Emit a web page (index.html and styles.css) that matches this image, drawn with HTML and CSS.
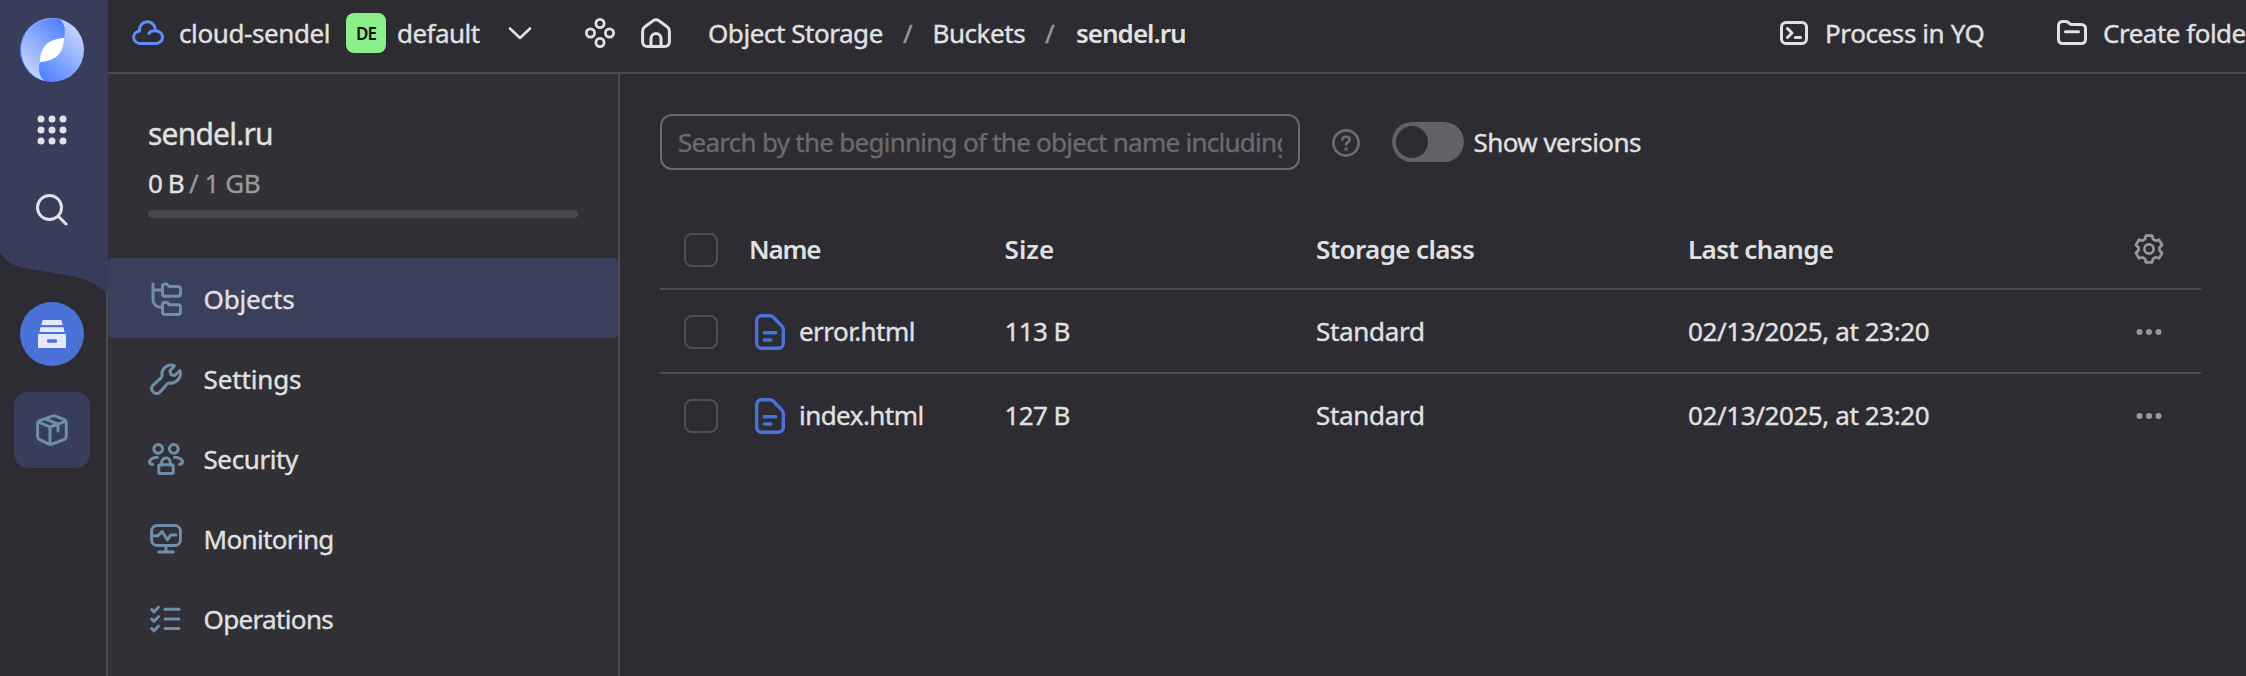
FILE: index.html
```html
<!DOCTYPE html>
<html lang="en">
<head>
<meta charset="utf-8">
<title>sendel.ru</title>
<link rel="stylesheet" href="styles.css">
</head>
<body>
<div class="app">
  <aside class="rail">
    <svg class="rail-wave" width="108" height="300" viewBox="0 0 108 300"><path d="M0 0H108V293.500C98 285.500 88 280 74 276.500L22 267.500C12 265.500 5 260 0 252Z"/></svg>
    <a class="logo">
      <svg width="64" height="64" viewBox="0 0 64 64">
        <defs>
          <linearGradient id="lobe-a" x1="0" y1="50" x2="42" y2="6" gradientUnits="userSpaceOnUse"><stop offset=".1" stop-color="#bccfff"/><stop offset="1" stop-color="#5282ff"/></linearGradient>
          <linearGradient id="lobe-b" x1="64" y1="14" x2="22" y2="58" gradientUnits="userSpaceOnUse"><stop offset=".1" stop-color="#bccfff"/><stop offset="1" stop-color="#5282ff"/></linearGradient>
        </defs>
        <circle cx="32" cy="32" r="32" fill="url(#lobe-b)"/>
        <path d="M39 .8C44.500 5 46 11 44.200 20L19.800 44C18 53 19.500 59 25 63.200A32 32 0 0 1 39 .8Z" fill="url(#lobe-a)"/>
        <path d="M44.200 19.800C43 36 37 42 19.800 44.200C21 28 27 22 44.200 19.800Z" fill="#fff"/>
      </svg>
    </a>
    <svg class="rail-apps" width="32" height="32" viewBox="0 0 32 32"><circle cx="5" cy="5" r="3.500"/><circle cx="16" cy="5" r="3.500"/><circle cx="27" cy="5" r="3.500"/><circle cx="5" cy="16" r="3.500"/><circle cx="16" cy="16" r="3.500"/><circle cx="27" cy="16" r="3.500"/><circle cx="5" cy="27" r="3.500"/><circle cx="16" cy="27" r="3.500"/><circle cx="27" cy="27" r="3.500"/></svg>
    <svg class="rail-search line" width="32" height="32" viewBox="0 0 32 32"><circle cx="13.500" cy="13.500" r="12"/><path d="M22.500 22.500L30 30"/></svg>
    <a class="rail-service">
      <svg width="28" height="28" viewBox="0 0 28 28"><path d="M4.500 0h19l1 5h-21zM2.500 7.300h23L26.500 12h-25zM1 14h26a1 1 0 0 1 1 1v12a1 1 0 0 1-1 1H1a1 1 0 0 1-1-1V15a1 1 0 0 1 1-1z" fill="#e4eafc"/><rect x="9" y="19.200" width="10" height="3.600" rx="1.200" fill="#4a72d9"/></svg>
    </a>
    <a class="rail-tile">
      <svg class="line" width="32" height="32" viewBox="0 0 32 32"><path d="M16.500 2.100a4 4 0 0 1 3 0l8.300 3.200a4 4 0 0 1 2.500 3.700v13a4 4 0 0 1-2.400 3.700l-12 4.500a4 4 0 0 1-3 0l-9-4.300a4 4 0 0 1-2.300-3.600V10A4 4 0 0 1 4.200 6.300zM2.600 7.800L14 13l15.500-5.700M14 13v16.500M9.600 5.200L22 10.200V17"/></svg>
    </a>
  </aside>

  <div class="main">
    <header class="topbar">
      <svg class="cloud line" width="32" height="32" viewBox="0 0 32 32"><path d="M8 26.400H24.200a6.200 6.200 0 0 0 .3-12.400c-.6 0-1-.1-1.300-.2A7.900 7.900 0 1 0 7.600 14 6.200 6.200 0 0 0 8 26.400zM23 13.800c-2.800-.3-4.800.5-6.200 2.600"/></svg>
      <span class="cloud-name">cloud-sendel</span>
      <span class="badge">DE</span>
      <span class="folder-name">default</span>
      <svg class="chevron line" width="24" height="14" viewBox="0 0 24 14"><path d="M2 2.500l10 9.500 10-9.500"/></svg>
      <svg class="dots4 line" width="30" height="30" viewBox="0 0 30 30"><circle cx="15" cy="5.500" r="4.100"/><circle cx="5.500" cy="15" r="4.100"/><circle cx="24.500" cy="15" r="4.100"/><circle cx="15" cy="24.500" r="4.100"/></svg>
      <svg class="home line" width="30" height="30" viewBox="0 0 30 30"><path d="M1.600 13.200a5.500 5.500 0 0 1 2.300-4.500l8-5.800a5.300 5.300 0 0 1 6.200 0l8 5.800a5.500 5.500 0 0 1 2.300 4.500v10.700a4.500 4.500 0 0 1-4.500 4.500H6.100a4.500 4.500 0 0 1-4.500-4.500zM10 28v-7.500a5 5 0 0 1 10 0V28"/></svg>
      <nav class="crumbs">
        <span class="crumb-service">Object Storage</span>
        <span class="sep">/</span>
        <span class="crumb-section">Buckets</span>
        <span class="sep">/</span>
        <span class="crumb-current">sendel.ru</span>
      </nav>
      <div class="actions">
        <svg class="line process-icon" width="28" height="24" viewBox="0 0 28 24"><rect x="1.500" y="1.500" width="25" height="21" rx="4.500"/><path d="M7.500 7.500l4.500 4.500-4.500 4.500M15.200 16.500h5.300"/></svg>
        <span class="action-process">Process in YQ</span>
        <svg class="line folder-icon" width="30" height="25" viewBox="0 0 30 25"><path d="M1.500 5.500a4 4 0 0 1 4-4h3.200a4 4 0 0 1 2.600 1l1.400 1.100a4 4 0 0 0 2.500.9h9.300a4 4 0 0 1 4 4v11a4 4 0 0 1-4 4h-19a4 4 0 0 1-4-4zM8.500 11.700h13"/></svg>
        <span class="action-create">Create folder</span>
      </div>
    </header>

    <div class="body">
      <aside class="side">
        <div class="summary">
          <h1 class="bucket">sendel.ru</h1>
          <div class="quota"><span class="used">0 B</span><span class="slash">/</span><span class="total">1 GB</span></div>
          <div class="bar"></div>
        </div>
        <nav class="menu">
          <a class="item active">
            <svg class="line" width="36" height="36" viewBox="0 0 36 36"><path d="M5 3v15.500a7.500 7.500 0 0 0 7.500 7.700H14M5 9h9.500M14.500 5.500a2.500 2.500 0 0 1 2.500-2.500h1.800l2.600 2.500h8.600a2.500 2.500 0 0 1 2.500 2.500v4.700a2.500 2.500 0 0 1-2.500 2.500H17a2.500 2.500 0 0 1-2.500-2.500zM14.500 23.700a2.500 2.500 0 0 1 2.500-2.500h1.800l2.600 2.500h8.600a2.500 2.500 0 0 1 2.500 2.500v4.700a2.500 2.500 0 0 1-2.500 2.500H17a2.500 2.500 0 0 1-2.500-2.500z"/></svg>
            <span class="snug">Objects</span>
          </a>
          <a class="item">
            <svg class="line" width="36" height="36" viewBox="0 0 36 36"><path d="M26.500 4.800C20.500 2 13.300 7 14 14.400c.1 1.200-.2 2-1.100 2.800L5.400 23.800a4.900 4.900 0 1 0 6.900 6.900l6.500-7.400c.8-.9 1.600-1.300 2.800-1.200 7.400.6 12.500-6.600 10.400-12.600L26.700 14.500l-3.700-.8-1.200-3.800z"/></svg>
            <span class="snug">Settings</span>
          </a>
          <a class="item">
            <svg class="line" width="36" height="36" viewBox="0 0 36 36"><circle cx="10.200" cy="7.800" r="4.400"/><circle cx="25.800" cy="7.800" r="4.400"/><path d="M4.600 23.300C2.700 23.300 1.600 22.300 1.600 21c0-2.600 3.200-4.700 7.800-4.700M31.400 23.300c1.900 0 3-1 3-2.300 0-2.600-3.200-4.700-7.800-4.700M13.700 24v-2.600a4.300 4.300 0 0 1 8.600 0V24"/><rect x="10.800" y="23.700" width="14.400" height="8.800" rx="1.200"/></svg>
            <span>Security</span>
          </a>
          <a class="item">
            <svg class="line" width="36" height="36" viewBox="0 0 36 36"><rect x="3.600" y="4.600" width="28.800" height="20" rx="5.500"/><path d="M4 14.800h6l4-4.300 5.300 8.300 3.500-4.800h5M18 25v5.500M10.700 31h14.600"/></svg>
            <span class="tight">Monitoring</span>
          </a>
          <a class="item">
            <svg class="line" width="36" height="36" viewBox="0 0 36 36"><path d="M17 8.300h14M17 18h14M17 27.500h14M3.600 8.500l2.400 2.300 4.500-4.600M3.600 18l2.400 2.300 4.500-4.600M3.600 27.500l2.400 2.300 4.500-4.600"/></svg>
            <span class="tight">Operations</span>
          </a>
        </nav>
      </aside>

      <main class="content">
        <div class="toolbar">
          <input class="search" type="text" placeholder="Search by the beginning of the object name including the prefix">
          <svg class="help line" width="28" height="28" viewBox="0 0 28 28"><circle cx="14" cy="14" r="12.600"/><path d="M10.300 10.600c.3-1.800 1.700-2.900 3.700-2.900 2.100 0 3.700 1.200 3.700 3 0 2.600-3.600 2.300-3.600 4.700"/><circle cx="14.100" cy="19.900" r=".6"/></svg>
          <span class="toggle"><span class="knob"></span></span>
          <span class="toggle-label">Show versions</span>
        </div>
        <div class="table">
          <div class="row head">
            <span class="check"></span>
            <span class="head-name">Name</span><span class="head-size">Size</span><span>Storage class</span><span>Last change</span>
            <svg class="gear line" width="30" height="30" viewBox="0 0 30 30"><path d="M11.920 1.650H18.080L18.970 5.170 21.530 6.650 25.020 5.660 28.100 10.990 25.500 13.520V16.480L28.100 19.010 25.020 24.340 21.530 23.350 18.970 24.830 18.080 28.350H11.920L11.030 24.830 8.470 23.350 4.980 24.340 1.900 19.010 4.500 16.480V13.520L1.900 10.990 4.980 5.660 8.470 6.650 11.030 5.170Z"/><circle cx="15" cy="15" r="4.600"/></svg>
          </div>
          <div class="row">
            <span class="check"></span>
            <span class="name"><svg class="file line" width="30" height="36" viewBox="0 0 30 36"><path d="M6.700 1.700h8.100a5 5 0 0 1 3.600 1.500l8.500 9a5 5 0 0 1 1.400 3.500v13.600a5 5 0 0 1-5 5H6.700a5 5 0 0 1-5-5V6.700a5 5 0 0 1 5-5zM9.300 18.700h11.500M9.300 26h6.600"/></svg><span>error.html</span></span>
            <span class="size">113 B</span><span class="class">Standard</span><span class="date">02/13/2025, at 23:20</span>
            <svg class="more" width="28" height="8" viewBox="0 0 28 8"><circle cx="4.500" cy="4" r="3"/><circle cx="14" cy="4" r="3"/><circle cx="23.500" cy="4" r="3"/></svg>
          </div>
          <div class="row">
            <span class="check"></span>
            <span class="name"><svg class="file line" width="30" height="36" viewBox="0 0 30 36"><path d="M6.700 1.700h8.100a5 5 0 0 1 3.600 1.500l8.500 9a5 5 0 0 1 1.400 3.500v13.600a5 5 0 0 1-5 5H6.700a5 5 0 0 1-5-5V6.700a5 5 0 0 1 5-5zM9.300 18.700h11.500M9.300 26h6.600"/></svg><span>index.html</span></span>
            <span class="size">127 B</span><span class="class">Standard</span><span class="date">02/13/2025, at 23:20</span>
            <svg class="more" width="28" height="8" viewBox="0 0 28 8"><circle cx="4.500" cy="4" r="3"/><circle cx="14" cy="4" r="3"/><circle cx="23.500" cy="4" r="3"/></svg>
          </div>
        </div>
      </main>
    </div>
  </div>
</div>
</body>
</html>
```
FILE: styles.css
```css
* { box-sizing: border-box; }
body { margin: 0; background: #2d2c33; color: #e2e1e2; font: 26px/36px "Noto Sans", sans-serif; letter-spacing: -0.4px; -webkit-text-stroke: 0.35px; overflow: hidden; }
svg { display: block; flex: none; }
span { white-space: nowrap; }
.line { fill: none; stroke: currentColor; stroke-width: 3; stroke-linecap: round; stroke-linejoin: round; }
.app { display: flex; width: 2246px; height: 676px; overflow: hidden; }

.rail { position: relative; width: 108px; flex: none; display: flex; flex-direction: column; align-items: center; padding: 18px 2px 0 0; border-right: 2px solid #4c4b50; }
.rail-wave { position: absolute; left: 0; top: 0; fill: #373d5a; }
.logo, .rail-apps, .rail-search { position: relative; }
.rail-apps { margin-top: 32px; fill: #e1e2e8; }
.rail-search { margin-top: 48px; color: #e1e2e8; }
.rail-service { margin-top: 80px; width: 64px; height: 64px; border-radius: 50%; background: #4a72d9; display: grid; place-items: center; position: relative; }
.rail-service { margin-top: 76px; }
.rail-tile { margin-top: 26px; width: 76px; height: 76px; border-radius: 14px; background: #373d5a; color: #6f8ea8; display: grid; place-items: center; }

.main { flex: 1; min-width: 0; display: flex; flex-direction: column; }
.topbar { height: 74px; flex: none; display: flex; align-items: center; padding: 0 0 7px 24px; border-bottom: 2px solid #4c4b50; }
.cloud { color: #5c8dfe; }
.cloud-name { margin-left: 15px; width: 167px; }
.badge { width: 40px; height: 40px; border-radius: 8px; background: #8cf08a; color: #111; font-size: 17px; font-weight: 600; line-height: 41px; letter-spacing: -0.9px; text-align: center; -webkit-text-stroke: 0; }
.folder-name { margin-left: 11px; width: 111px; letter-spacing: -0.54px; }
.chevron { stroke-width: 2.6; }
.dots4 { margin-left: 53px; stroke-width: 2.8; }
.home { margin-left: 26px; }
.crumbs { display: flex; margin-left: 37px; letter-spacing: -0.45px; }
.crumb-service { width: 195px; }
.crumb-section { width: 112.5px; }
.sep { color: #99989b; width: 29.5px; }
.crumb-section + .sep { width: 31px; }
.crumb-current { font-weight: 600; letter-spacing: -1px; -webkit-text-stroke: 0; }
.actions { display: flex; align-items: center; margin-left: auto; }
.action-process { margin-left: 17px; width: 232px; }
.folder-icon { margin-right: 16px; }
.action-create { width: 143px; letter-spacing: -0.5px; }

.body { flex: 1; display: flex; min-height: 0; }
.side { width: 512px; flex: none; background: #313036; border-right: 2px solid #4c4b50; }
.summary { height: 184px; padding: 40px 40px 0; }
.bucket { margin: 0; font-size: 30px; font-weight: 400; line-height: 40px; letter-spacing: -0.8px; }
.quota { margin-top: 11px; display: flex; }
.used { width: 41px; letter-spacing: -0.9px; }
.slash { width: 15.5px; }
.slash, .total { color: #99989b; }
.bar { margin-top: 9px; height: 8px; border-radius: 4px; background: #48474b; }
.item { display: flex; align-items: center; gap: 19.5px; height: 80px; padding: 2px 40px 0; border-radius: 5px; }
.item svg { color: #6f8ea8; }
.item.active { background: #3a3f5c; }
.snug { letter-spacing: -0.14px; }
.tight { letter-spacing: -0.65px; }

.content { flex: 1; min-width: 0; padding: 40px 45px 0 40px; }
.toolbar { display: flex; align-items: center; height: 56px; }
.search { width: 640px; height: 56px; padding: 0 16px 1px; border: 2px solid #6a696d; border-radius: 12px; background: transparent; font: inherit; letter-spacing: -0.73px; color: inherit; outline: none; }
.search::placeholder { color: #6b6a6e; opacity: 1; }
.help { margin: 2px 0 0 32px; color: #6f6e72; stroke-width: 2.6; }
.toggle { margin-left: 32px; width: 72px; height: 40px; border-radius: 20px; background: #626166; padding: 4px; }
.knob { display: block; width: 32px; height: 32px; border-radius: 50%; background: #2d2c33; }
.toggle-label { margin-left: 9.5px; letter-spacing: -0.57px; }
.table { margin-top: 40px; }
.row { display: grid; grid-template-columns: 89px 255.5px 311.5px 372px 420px 1fr; align-items: center; height: 84px; border-bottom: 2px solid #4c4b50; }
.row:last-child { border-bottom-color: transparent; }
.row.head { height: 80px; font-weight: 600; letter-spacing: -0.64px; -webkit-text-stroke: 0; }
.row .head-name { letter-spacing: -1.16px; }
.row .head-size { letter-spacing: 0.09px; }
.check { width: 34px; height: 34px; margin: 2px 0 0 24px; border: 2px solid #4f4e53; border-radius: 8px; }
.name { display: flex; align-items: center; gap: 14px; padding-left: 6px; letter-spacing: -0.55px; }
.file { color: #4a72d9; stroke-width: 3.4; margin-top: 2px; }
.size { letter-spacing: -0.59px; }
.class { letter-spacing: -0.3px; }
.gear { margin-left: 26px; color: #99989b; stroke-width: 2.6; }
.more { margin: 2px 0 0 27px; fill: #99989b; }
```
